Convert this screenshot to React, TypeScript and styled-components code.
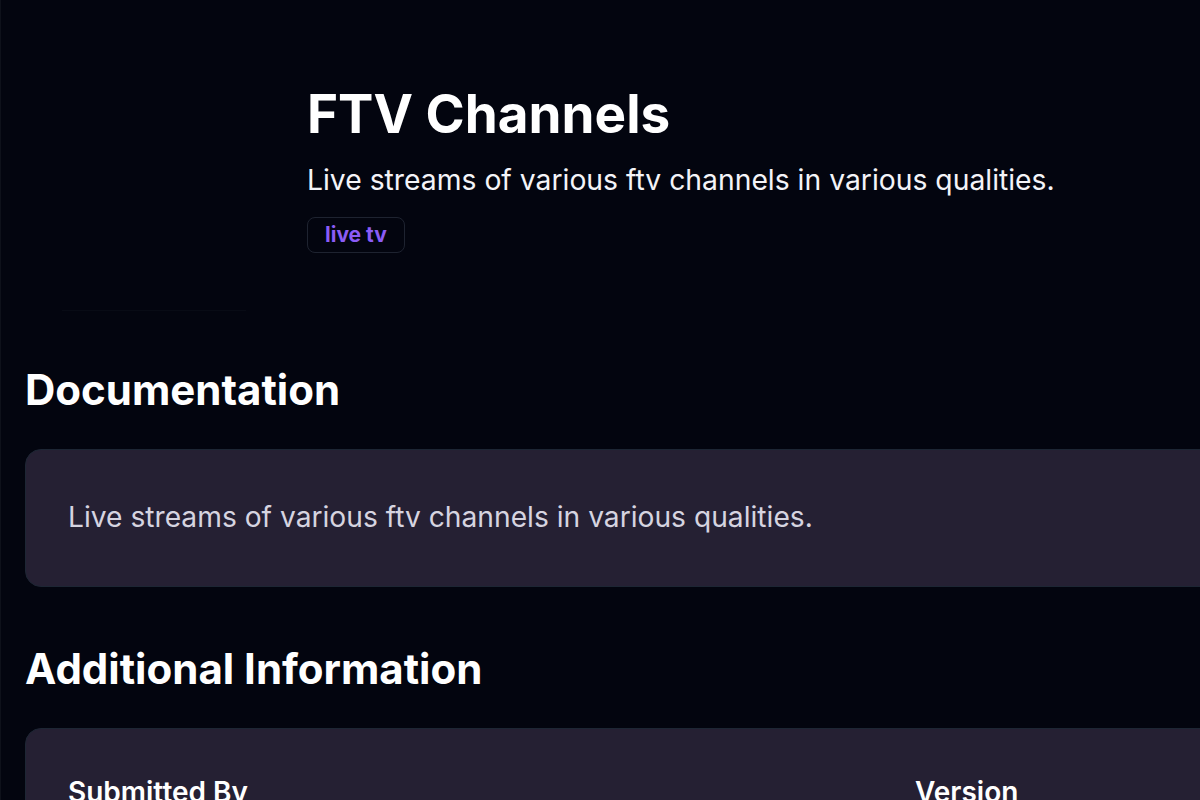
import styled, { createGlobalStyle } from "styled-components";

const GlobalStyle = createGlobalStyle`
  html, body {
    margin: 0;
    padding: 0;
    background: #03050f;
    overflow: hidden;
  }
  body {
    font-family: Inter, "Noto Sans", "Liberation Sans", sans-serif;
    color: #ffffff;
  }
`

const Page = styled.div`
  width: 1500px;
  min-height: 800px;
  padding: 0 0 0 24px;
  box-sizing: border-box;
  border-left: 1px solid #0e111a;
`

const Header = styled.header`
  display: flex;
  flex-direction: row;
  gap: 24px;
  padding-top: 83px;
  padding-bottom: 54px;
`

const Cover = styled.div`
  width: 258px;
  height: 228px;
  display: flex;
  justify-content: center;
  align-items: flex-end;
`

const CoverFrame = styled.div`
  width: 184px;
  height: 1px;
  background: #080b15;
`

const HeaderText = styled.div`
  display: flex;
  flex-direction: column;
  align-items: flex-start;
`

const Title = styled.h1`
  margin: 0;
  font-size: 53px;
  font-weight: 700;
  line-height: 1.2;
`

const Subtitle = styled.p`
  margin: 14px 0 0;
  font-size: 28.3px;
  line-height: 1.4;
  color: #f4f4f8;
`

const Tag = styled.span`
  margin-top: 17px;
  padding: 4px 17px;
  border: 1px solid #1e2330;
  border-radius: 8px;
  font-size: 21px;
  font-weight: 700;
  line-height: 26px;
  color: #8b5cf6;
`

const Section = styled.section`
  margin-bottom: 57px;
`

const SectionTitle = styled.h2`
  margin: 0 0 34px;
  font-size: 42px;
  font-weight: 700;
  line-height: 1.2;
`

const Card = styled.div`
  background: #252033;
  border: 1px solid #1d2634;
  border-radius: 16px;
  padding: 45px 42px;
`

const CardText = styled.p`
  margin: 0;
  font-size: 28.2px;
  line-height: 1.6;
  color: #d6d4e0;
`

const InfoGrid = styled.div`
  display: grid;
  grid-template-columns: 847px 1fr;
`

const InfoLabel = styled.div`
  font-size: 28px;
  font-weight: 600;
  line-height: 1.3;
`

export default function App() {
  return (
    <>
      <GlobalStyle />
      <Page>
        <Header>
          <Cover>
            <CoverFrame />
          </Cover>
          <HeaderText>
            <Title>FTV Channels</Title>
            <Subtitle>Live streams of various ftv channels in various qualities.</Subtitle>
            <Tag>live tv</Tag>
          </HeaderText>
        </Header>
        <Section>
          <SectionTitle>Documentation</SectionTitle>
          <Card>
            <CardText>Live streams of various ftv channels in various qualities.</CardText>
          </Card>
        </Section>
        <Section>
          <SectionTitle>Additional Information</SectionTitle>
          <Card>
            <InfoGrid>
              <InfoLabel>Submitted By</InfoLabel>
              <InfoLabel>Version</InfoLabel>
            </InfoGrid>
          </Card>
        </Section>
      </Page>
    </>
  );
}
